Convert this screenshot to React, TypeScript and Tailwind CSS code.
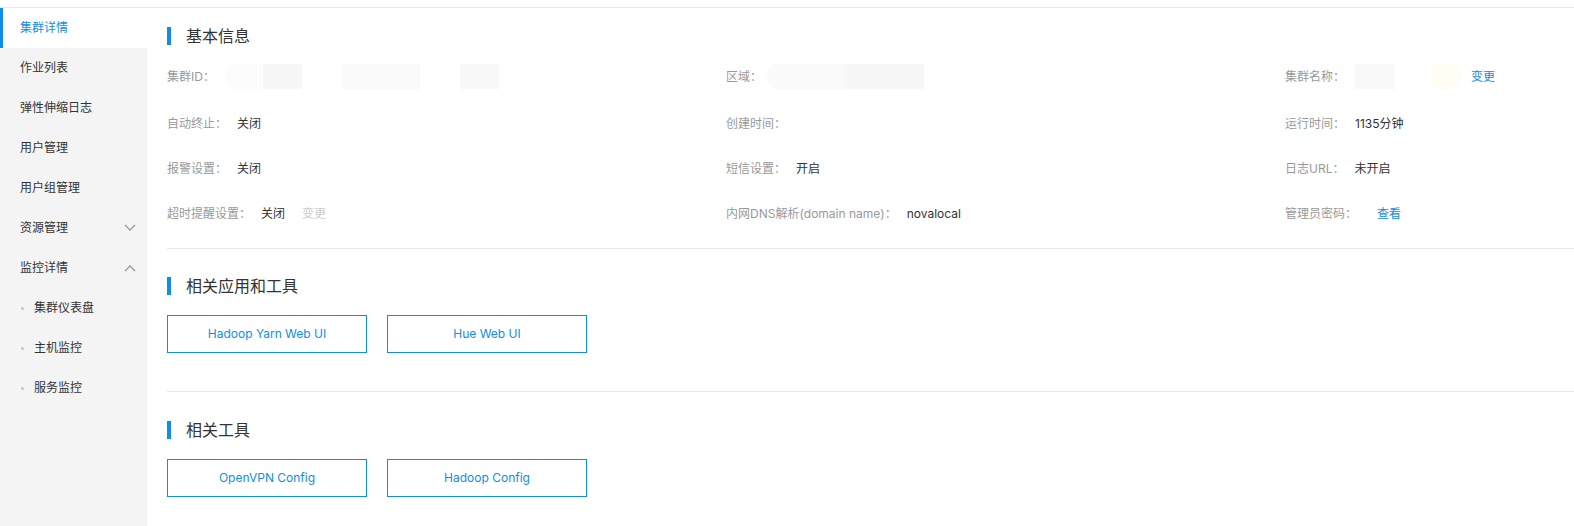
import React from "react";

const BLUE = "text-[#0e8ee9]";

function Chevron({ up }: { up?: boolean }) {
  return (
    <svg width="12" height="8" viewBox="0 0 12 8" className="text-[#999]">
      <path
        d={up ? "M1 7 L6 2 L11 7" : "M1 1 L6 6 L11 1"}
        fill="none"
        stroke="currentColor"
        strokeWidth="1.3"
      />
    </svg>
  );
}

function SideItem({
  label,
  active,
  chevron,
  sub,
}: {
  label: string;
  active?: boolean;
  chevron?: "up" | "down";
  sub?: boolean;
}) {
  return (
    <div
      className={`relative flex h-10 items-center pr-[11px] text-[12px] ${
        active ? "bg-white text-[#0e8ee9]" : "text-[#333]"
      } ${sub ? "pl-[21px]" : "pl-5"}`}
    >
      {active && <span className="absolute left-0 top-0 h-full w-[3px] bg-[#0e8ee9]" />}
      {sub && <span className="mr-[10px] h-[3px] w-[3px] rounded-full bg-[#c4c4c4]" />}
      <span className="flex-1">{label}</span>
      {chevron && <Chevron up={chevron === "up"} />}
    </div>
  );
}

function SectionTitle({ title }: { title: string }) {
  return (
    <div className="flex h-[18px] items-center">
      <span className="h-[18px] w-1 bg-[#0e8ee9]" />
      <span className="ml-[15px] text-[16px] leading-none text-[#333]">{title}</span>
    </div>
  );
}

function Field({
  label,
  children,
}: {
  label: string;
  children?: React.ReactNode;
}) {
  return (
    <div className="flex items-center text-[12px] leading-none">
      <span className="text-[#999]">{label}：</span>
      <div className="ml-[10px] flex items-center text-[#333]">{children}</div>
    </div>
  );
}

function Blur({ w, c, round }: { w: number; c: string; round?: string }) {
  return <span className={`inline-block h-[25px] ${c} ${round ?? ""}`} style={{ width: w }} />;
}

function LinkBtn({ text }: { text: string }) {
  return (
    <button
      className={`flex h-[38px] w-[200px] items-center justify-center border border-[#0e8ee9] bg-white text-[12px] ${BLUE}`}
    >
      {text}
    </button>
  );
}

export default function App() {
  return (
    <div
      className="flex min-h-[526px] flex-col bg-white"
      style={{ fontFamily: 'Inter, "Noto Sans CJK SC", sans-serif' }}
    >
      <div className="h-[8px] border-b border-[#eaeaf0]" />
      <div className="flex flex-1">
        <aside className="w-[147px] shrink-0 bg-[#f4f4f4]">
          <SideItem label="集群详情" active />
          <SideItem label="作业列表" />
          <SideItem label="弹性伸缩日志" />
          <SideItem label="用户管理" />
          <SideItem label="用户组管理" />
          <SideItem label="资源管理" chevron="down" />
          <SideItem label="监控详情" chevron="up" />
          <SideItem label="集群仪表盘" sub />
          <SideItem label="主机监控" sub />
          <SideItem label="服务监控" sub />
        </aside>

        <main className="flex-1 pl-5">
          <section className="pt-[19px]">
            <SectionTitle title="基本信息" />
            <div className="mt-[7px] grid grid-cols-[559px_559px_1fr]">
              <div className="flex h-[49px] items-center">
                <Field label="集群ID">
                  <span className="flex">
                    <Blur w={38} c="bg-[#fcfcfc]" round="rounded-l-full" />
                    <Blur w={39} c="bg-[#f7f7f7]" />
                    <span className="w-10" />
                    <Blur w={78} c="bg-[#fafafa]" />
                    <span className="w-10" />
                    <Blur w={39} c="bg-[#f8f8f8]" />
                  </span>
                </Field>
              </div>
              <div className="flex h-[49px] items-center">
                <Field label="区域">
                  <span className="-ml-[5px] flex">
                    <Blur w={77} c="bg-[#fafafa]" round="rounded-l-full" />
                    <Blur w={80} c="bg-[#f7f7f7]" />
                  </span>
                </Field>
              </div>
              <div className="flex h-[49px] items-center">
                <Field label="集群名称">
                  <span className="flex items-center">
                    <Blur w={40} c="bg-[#f9f9f9]" />
                    <span className="w-[37px]" />
                    <Blur w={30} c="bg-[#fffdf4]" round="rounded-r-full" />
                    <span className={`ml-[9px] ${BLUE}`}>变更</span>
                  </span>
                </Field>
              </div>

              <div className="flex h-[45px] items-center">
                <Field label="自动终止">关闭</Field>
              </div>
              <div className="flex h-[45px] items-center">
                <Field label="创建时间" />
              </div>
              <div className="flex h-[45px] items-center">
                <Field label="运行时间">1135分钟</Field>
              </div>

              <div className="flex h-[45px] items-center">
                <Field label="报警设置">关闭</Field>
              </div>
              <div className="flex h-[45px] items-center">
                <Field label="短信设置">开启</Field>
              </div>
              <div className="flex h-[45px] items-center">
                <Field label="日志URL">未开启</Field>
              </div>

              <div className="flex h-[45px] items-center">
                <Field label="超时提醒设置">
                  关闭<span className="ml-[17px] text-[#ccc]">变更</span>
                </Field>
              </div>
              <div className="flex h-[45px] items-center">
                <Field label="内网DNS解析(domain name)">novalocal</Field>
              </div>
              <div className="flex h-[45px] items-center">
                <Field label="管理员密码">
                  <span className={`ml-[10px] ${BLUE}`}>查看</span>
                </Field>
              </div>
            </div>
            <div className="mt-[12px] border-b border-[#e8e8e8]" />
          </section>

          <section className="pt-[28px]">
            <SectionTitle title="相关应用和工具" />
            <div className="mt-5 flex gap-5">
              <LinkBtn text="Hadoop Yarn Web UI" />
              <LinkBtn text="Hue Web UI" />
            </div>
            <div className="mt-[38px] border-b border-[#e8e8e8]" />
          </section>

          <section className="pt-[29px]">
            <SectionTitle title="相关工具" />
            <div className="mt-5 flex gap-5">
              <LinkBtn text="OpenVPN Config" />
              <LinkBtn text="Hadoop Config" />
            </div>
          </section>
        </main>
      </div>
    </div>
  );
}
